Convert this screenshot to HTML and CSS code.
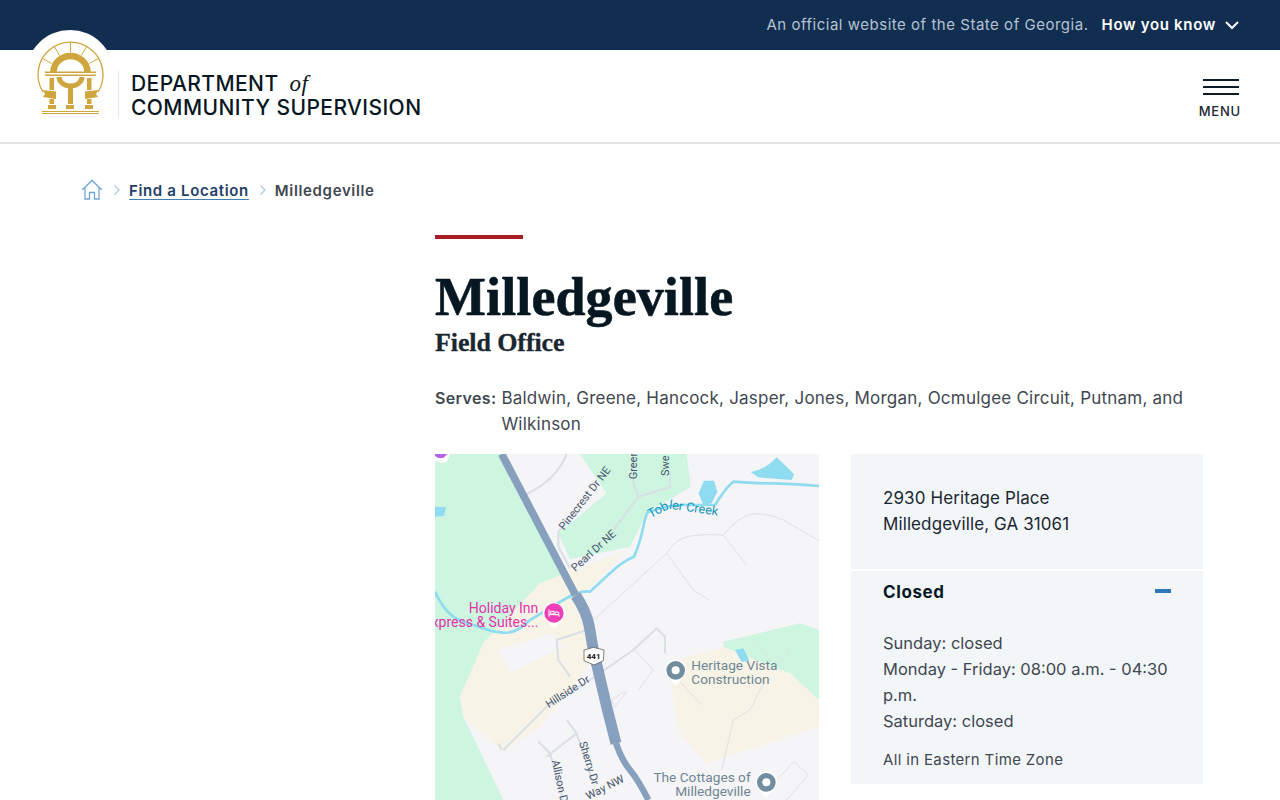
FILE: index.html
```html
<!DOCTYPE html>
<html lang="en">
<head>
    <meta charset="UTF-8">
    <meta name="viewport" content="width=device-width, initial-scale=1.0">
    <title>Milledgeville Field Office</title>
    <link rel="stylesheet" href="styles.css">
</head>
<body>
    <div class="top-bar">
        <span class="official">An official website of the State of Georgia.</span>
        <span class="how-know">How you know</span>
        <svg class="chevron" width="16" height="10" viewBox="0 0 16 10"><path d="M2 2l6 6 6-6" fill="none" stroke="#fff" stroke-width="2"/></svg>
    </div>

    <header class="site-header">
        <div class="seal">
            <svg width="88" height="88" viewBox="26 30 88 88">
                <g fill="none" stroke="#cfa63d">
                    <path d="M43 92A32.500 32.500 0 1 1 98 92" stroke-width="1.300"/>
                    <path d="M70.500 52.500V42M81.500 55.400L86.500 46.800M59.500 55.400L54.500 46.800M89.500 63.500L98.200 58.500M51.500 63.500L42.800 58.500" stroke-width="1"/>
                    <path d="M53.500 72A17 16 0 0 1 87.500 72" stroke-width="6.500"/>
                    <path d="M59 77A11.500 9 0 0 0 82 77" stroke-width="5"/>
                </g>
                <g fill="#cfa63d">
                    <rect x="45" y="71.500" width="51" height="1.500"/>
                    <rect x="45" y="74.500" width="51" height="1.500"/>
                    <rect x="49.500" y="78" width="4.500" height="12"/>
                    <rect x="68" y="88" width="5" height="16"/>
                    <rect x="87" y="78" width="4.500" height="12"/>
                    <rect x="49.500" y="99" width="4.500" height="5"/>
                    <rect x="87" y="99" width="4.500" height="5"/>
                    <path d="M42.500 90l13.500 1.500v7.500l-13-2 2-3z"/>
                    <path d="M98.500 90l-13.500 1.500v7.500l13-2-2-3z"/>
                    <rect x="48" y="105" width="8" height="4"/>
                    <rect x="66" y="105" width="8" height="4"/>
                    <rect x="85" y="105" width="8" height="4"/>
                    <rect x="42" y="111" width="57" height="1"/>
                    <rect x="42" y="113" width="57" height="1"/>
                </g>
            </svg>
        </div>
        <div class="brand">
            <div class="brand-line">DEPARTMENT <em>of</em></div>
            <div class="brand-line">COMMUNITY SUPERVISION</div>
        </div>
        <div class="menu-toggle">
            <div class="bars"><span></span><span></span><span></span></div>
            <div class="menu-label">MENU</div>
        </div>
    </header>

    <nav class="breadcrumbs">
        <svg width="22" height="22" viewBox="0 0 22 22" fill="none" stroke="#6ea6d3" stroke-width="1.300"><path d="M1 11L11 1.500 21 11M4 8.500V20H8.500V13.500H13.500V20H18V8.500"/></svg>
        <svg class="sep" width="8" height="12" viewBox="0 0 8 12"><path d="M1.500 1.500L6 6l-4.500 4.500" fill="none" stroke="#a9c6de" stroke-width="1.200"/></svg>
        <a href="#">Find a Location</a>
        <svg class="sep" width="8" height="12" viewBox="0 0 8 12"><path d="M1.500 1.500L6 6l-4.500 4.500" fill="none" stroke="#a9c6de" stroke-width="1.200"/></svg>
        <span>Milledgeville</span>
    </nav>

    <main class="content">
        <div class="accent"></div>
        <h1>Milledgeville</h1>
        <h2>Field Office</h2>
        <div class="serves">
            <strong>Serves:</strong>
            <p>Baldwin, Greene, Hancock, Jasper, Jones, Morgan, Ocmulgee Circuit, Putnam, and Wilkinson</p>
        </div>

        <div class="details">
            <svg class="map" width="384" height="346" viewBox="15 12 1152 1038">
                <rect x="15" y="12" width="1152" height="1038" fill="#f5f4f6"/>
                <!-- green and built-up areas -->
                <path d="M15 12H215L420 380 330 400 160 580 90 740 100 800 220 1050H15Z" fill="#cdf5e0"/>
                <path d="M450 12H770L782 110 650 190 600 290 420 328 385 250 530 130Z" fill="#cdf5e0"/>
                <path d="M880 575L1110 520 1167 540V750L1080 670 880 610Z" fill="#cdf5e0"/>
                <path d="M710 640L880 590 1000 640 1080 670 1167 750V830L830 940 750 850Z" fill="#f7f3e7"/>
                <path d="M330 400L420 365 590 300 500 395 450 440 500 620 330 830 220 905 100 800 90 740 160 580Z" fill="#f7f3e7"/>
                <path d="M205 600L370 550 400 590 240 670Z" fill="#f5f4f6"/>
                <!-- water -->
                <g fill="#8fdcf0">
                    <path d="M962 66Q1005 60 1040 22L1092 72 1085 90 985 82Z"/>
                    <path d="M822 92H852L862 125 845 160 820 165 806 130Z"/>
                    <path d="M15 170L48 172 42 198 15 200Z"/>
                    <path d="M915 600L940 595 958 632 935 636Z"/>
                </g>
                <path d="M15 425Q40 480 70 500T130 525Q180 545 220 548T300 510Q350 480 400 450T480 425L540 370Q575 335 612 320Q630 280 640 230T660 185Q710 165 760 165T855 165Q885 115 910 95Q960 100 1020 100T1167 108" fill="none" stroke="#8fdcf0" stroke-width="8"/>
                <!-- small streets -->
                <g fill="none" stroke="#d8dfe5" stroke-width="6">
                    <path d="M410 12Q380 90 290 132"/>
                    <path d="M420 355L385 290V245L420 210"/>
                    <path d="M550 240L625 140 720 112V70"/>
                    <path d="M625 140L610 100V12"/>
                    <path d="M215 900L205 880M220 900L350 770 480 690 610 600 680 535 705 560V610"/>
                    <path d="M470 540L380 570 385 630 420 680"/>
                    <path d="M350 920L440 850 410 810"/>
                    <path d="M325 875L360 910 400 1050"/>
                    <path d="M440 850L490 1000"/>
                </g>
                <g fill="none" stroke="#dfe1e6" stroke-width="3">
                    <path d="M480 520L710 310Q735 265 780 258T880 255Q930 195 970 192T1060 210L1167 272"/>
                    <path d="M880 255L950 345"/>
                    <path d="M710 310L790 420 840 452"/>
                    <path d="M610 595L670 660 625 720"/>
                    <path d="M745 690L815 765"/>
                    <path d="M590 725L555 770 545 750 578 728Z"/>
                    <path d="M1000 700L960 780 910 810 875 960"/>
                    <path d="M970 575L1040 650 1080 600"/>
                    <path d="M1040 990L1092 935 1135 975 1070 1050"/>
                </g>
                <!-- highway -->
                <path d="M215 12L437 436" fill="none" stroke="#86a0bd" stroke-width="23"/>
                <path d="M437 436Q468 480 478 530L490 600 530 770 558 880" fill="none" stroke="#86a0bd" stroke-width="33"/>
                <path d="M558 880Q575 930 600 960T655 1050" fill="none" stroke="#86a0bd" stroke-width="19"/>
                <path d="M462 600L490 592 522 600 520 632 492 645 462 632Z" fill="#fff" stroke="#444" stroke-width="2"/>
                <text x="491" y="628" class="shield">441</text>
                <!-- street labels -->
                <text class="street" transform="translate(402 242) rotate(-52)">Pinecrest Dr NE</text>
                <text class="street" transform="translate(436 366) rotate(-42)">Pearl Dr NE</text>
                <text class="street" transform="translate(620 88) rotate(-90)">Greer</text>
                <text class="street" transform="translate(718 78) rotate(-90)">Swe</text>
                <text class="street" transform="translate(356 775) rotate(-33)">Hillside Dr</text>
                <text class="street" transform="translate(447 878) rotate(73)">Sherry Dr</text>
                <text class="street" transform="translate(365 932) rotate(78)">Allison Dr</text>
                <text class="street" transform="translate(475 1050) rotate(-27)">Way NW</text>
                <text class="creek" transform="translate(662 205) rotate(-28)">Tob</text>
                <text class="creek" transform="translate(716 176) rotate(8)">ler Creek</text>
                <!-- places -->
                <text class="poi pink" x="325" y="488" text-anchor="end">Holiday Inn</text>
                <text class="poi pink" x="325" y="530" text-anchor="end">Express &amp; Suites...</text>
                <path d="M372 458a34 34 0 0 1 34 31c0 14-23 34-34 46-11-12-34-32-34-46a34 34 0 0 1 34-31z" fill="#fff"/>
                <circle cx="372" cy="489" r="29" fill="#ef3fb6"/>
                <path d="M357 478v22M357 494h30v6M362 484h10v8h-10zM375 486h10l2 8h-12z" fill="none" stroke="#fff" stroke-width="3"/>
                <path d="M737 628a33 33 0 0 1 33 33c0 14-22 34-33 46-11-12-33-32-33-46a33 33 0 0 1 33-33z" fill="#fff"/>
                <circle cx="737" cy="661" r="28" fill="#718e9f"/>
                <circle cx="737" cy="661" r="12" fill="#fff"/>
                <text class="poi" x="784" y="660">Heritage Vista</text>
                <text class="poi" x="784" y="702">Construction</text>
                <path d="M1009 964a33 33 0 0 1 33 33c0 14-22 34-33 46-11-12-33-32-33-46a33 33 0 0 1 33-33z" fill="#fff"/>
                <circle cx="1009" cy="997" r="28" fill="#718e9f"/>
                <circle cx="1009" cy="997" r="12" fill="#fff"/>
                <text class="poi" x="962" y="996" text-anchor="end">The Cottages of</text>
                <text class="poi" x="962" y="1038" text-anchor="end">Milledgeville</text>
                <path d="M15 12H60L50 35 32 40 15 30Z" fill="#fff"/>
                <path d="M15 12H52L40 24 25 24 15 18Z" fill="#b463e6"/>
            </svg>

            <aside class="info-card">
                <div class="address">
                    <div>2930 Heritage Place</div>
                    <div>Milledgeville, GA 31061</div>
                </div>
                <div class="hours">
                    <div class="hours-head">
                        <strong>Closed</strong>
                        <span class="collapse"></span>
                    </div>
                    <div class="hours-list">
                        <div>Sunday: closed</div>
                        <div>Monday - Friday: 08:00 a.m. - 04:30 p.m.</div>
                        <div>Saturday: closed</div>
                    </div>
                    <div class="time-zone">All in Eastern Time Zone</div>
                </div>
            </aside>
        </div>
    </main>
</body>
</html>
```

FILE: styles.css
```css
* {
    box-sizing: border-box;
    margin: 0;
    padding: 0;
}

html,
body {
    height: 800px;
    overflow: hidden;
}

body {
    font-family: Inter, "Open Sans", sans-serif;
    background-color: #fff;
    color: #3f4750;
}

.top-bar {
    height: 50px;
    background: #112e51;
    display: flex;
    align-items: center;
    justify-content: flex-end;
    padding: 0 40px 1px 0;
    font-size: 15px;
}

.official {
    color: #b5c2d1;
    margin-right: 13px;
    letter-spacing: 0.52px;
}

.how-know {
    color: #fff;
    font-weight: 600;
    margin-right: 8px;
    letter-spacing: 0.68px;
}

.site-header {
    position: relative;
    height: 94px;
    border-bottom: 2px solid #e4e4e4;
    display: flex;
    align-items: center;
    justify-content: space-between;
    padding: 0 41px 0 118px;
}

.seal {
    position: absolute;
    left: 26px;
    top: -20px;
    width: 88px;
    height: 88px;
    border-radius: 50%;
    background: #fff;
}

.brand {
    border-left: 1px solid #e8e8e8;
    padding-left: 12px;
    height: 48px;
    margin-top: -2px;
    color: #071722;
    font-size: 21px;
    font-weight: 500;
    line-height: 24px;
    letter-spacing: 0.42px;
    margin-right: auto;
}

.brand-line {
    position: relative;
    top: 1px;
}

.brand em {
    font-family: "Liberation Serif", serif;
    font-size: 23px;
    margin-left: 5px;
}

.menu-toggle {
    display: flex;
    flex-direction: column;
    align-items: flex-end;
    margin-top: 5px;
}

.bars {
    width: 36px;
    display: flex;
    flex-direction: column;
    gap: 5px;
}

.bars span {
    height: 2px;
    background: #0d1c28;
}

.menu-label {
    margin: 8px -2px 0 0;
    color: #1b2730;
    font-size: 13px;
    font-weight: 500;
    letter-spacing: 0.8px;
}

.breadcrumbs {
    display: flex;
    align-items: center;
    margin-left: 81px;
    height: 24px;
    margin-top: 34px;
    font-size: 15px;
    font-weight: 600;
    letter-spacing: 0.65px;
}

.breadcrumbs .sep {
    margin: 0 8px 0 10px;
}

.breadcrumbs a {
    color: #1f4068;
    text-decoration: underline;
    text-decoration-color: #3f7fb5;
    text-underline-offset: 3px;
    text-decoration-thickness: 1px;
}

.content {
    width: 768px;
    margin: 33px 0 0 435px;
}

.accent {
    width: 88px;
    height: 4px;
    background: #a81c22;
}

h1 {
    margin-top: 28px;
    font-family: "Liberation Serif", serif;
    font-size: 54px;
    font-weight: 700;
    line-height: 60px;
    color: #071722;
    letter-spacing: 0.1px;
    -webkit-text-stroke: 0.6px #071722;
}

h2 {
    margin-top: 1px;
    font-family: "Liberation Serif", serif;
    font-size: 26px;
    font-weight: 700;
    line-height: 30px;
    color: #1b2730;
    letter-spacing: -0.1px;
    -webkit-text-stroke: 0.3px #1b2730;
}

.serves {
    display: flex;
    gap: 5px;
    margin-top: 27px;
    font-size: 17px;
    line-height: 26px;
    letter-spacing: 0.22px;
}

.serves strong {
    font-weight: 600;
    font-size: 16px;
    letter-spacing: 0.35px;
}

.details {
    display: grid;
    grid-template-columns: 384px 352px;
    gap: 32px;
    margin-top: 17px;
    align-items: start;
}

.map {
    display: block;
}

.map text {
    font-family: Roboto, sans-serif;
}

.map .poi {
    font-size: 41px;
    fill: #6f8694;
}

.map .pink {
    font-size: 42px;
    fill: #e033a8;
}

.map .street {
    font-size: 33px;
    fill: #46566a;
}

.map .creek {
    font-size: 38px;
    fill: #1398bb;
}

.map .shield {
    font-size: 24px;
    font-weight: 700;
    text-anchor: middle;
    fill: #222;
}

.info-card {
    background: #f3f6f9;
    color: #1b2730;
    font-size: 17px;
    line-height: 26px;
    letter-spacing: 0.1px;
}

.address {
    padding: 31px 32px 32px;
    border-bottom: 2px solid #fff;
}

.hours {
    padding: 8px 32px 11px;
}

.hours-head {
    display: flex;
    align-items: center;
    justify-content: space-between;
    height: 26px;
}

.hours-head strong {
    color: #071722;
    font-weight: 700;
    letter-spacing: 0.6px;
}

.collapse {
    width: 16px;
    height: 4px;
    margin-top: -3px;
    background: #2e78ba;
}

.hours-list {
    margin-top: 25px;
    color: #3f4750;
    font-size: 16.500px;
    letter-spacing: 0;
}

.time-zone {
    margin-top: 13px;
    font-size: 15px;
    letter-spacing: 0.35px;
    color: #3f4750;
}
```
